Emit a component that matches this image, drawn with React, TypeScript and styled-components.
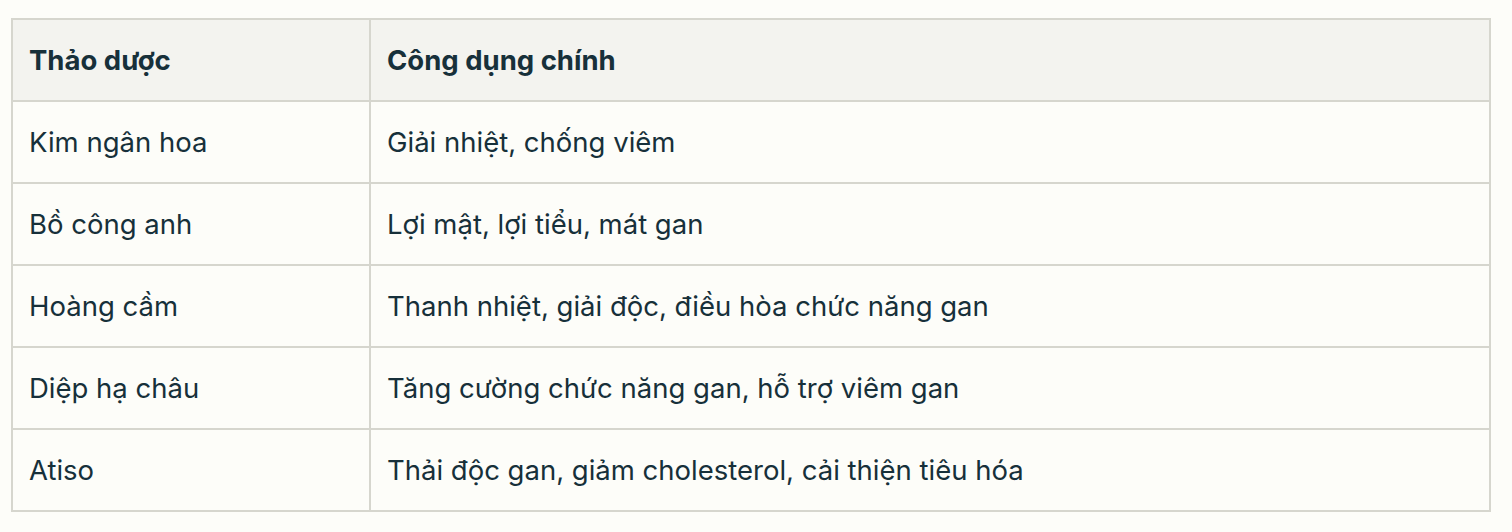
import styled, { createGlobalStyle } from "styled-components";

const rows = [
  ["Kim ngân hoa", "Giải nhiệt, chống viêm"],
  ["Bồ công anh", "Lợi mật, lợi tiểu, mát gan"],
  ["Hoàng cầm", "Thanh nhiệt, giải độc, điều hòa chức năng gan"],
  ["Diệp hạ châu", "Tăng cường chức năng gan, hỗ trợ viêm gan"],
  ["Atiso", "Thải độc gan, giảm cholesterol, cải thiện tiêu hóa"],
];

const GlobalStyle = createGlobalStyle`
  body {
    margin: 0;
    background: #fdfdf9;
    font-family: Inter, "Liberation Sans", Arial, sans-serif;
    color: #17303a;
  }
`;

const Page = styled.div`
  padding: 18px 21px 20px 11px;
`;

const Table = styled.table`
  width: 1480px;
  border-collapse: collapse;
  border: 2px solid #d6d6ce;
  font-size: 27.5px;
`;

const HeadCell = styled.th`
  background: #f3f3ef;
  font-weight: 700;
  text-align: left;
  padding: 20px 16px;
  line-height: 40px;
  border: 2px solid #d6d6ce;
`;

const Cell = styled.td`
  padding: 20px 16px;
  line-height: 40px;
  border: 2px solid #d6d6ce;
`;

export default function App() {
  return (
    <>
      <GlobalStyle />
      <Page>
        <Table>
          <colgroup>
            <col style={{ width: 358 }} />
            <col />
          </colgroup>
          <thead>
            <tr>
              <HeadCell>Thảo dược</HeadCell>
              <HeadCell>Công dụng chính</HeadCell>
            </tr>
          </thead>
          <tbody>
            {rows.map(([herb, use]) => (
              <tr key={herb}>
                <Cell>{herb}</Cell>
                <Cell>{use}</Cell>
              </tr>
            ))}
          </tbody>
        </Table>
      </Page>
    </>
  );
}
